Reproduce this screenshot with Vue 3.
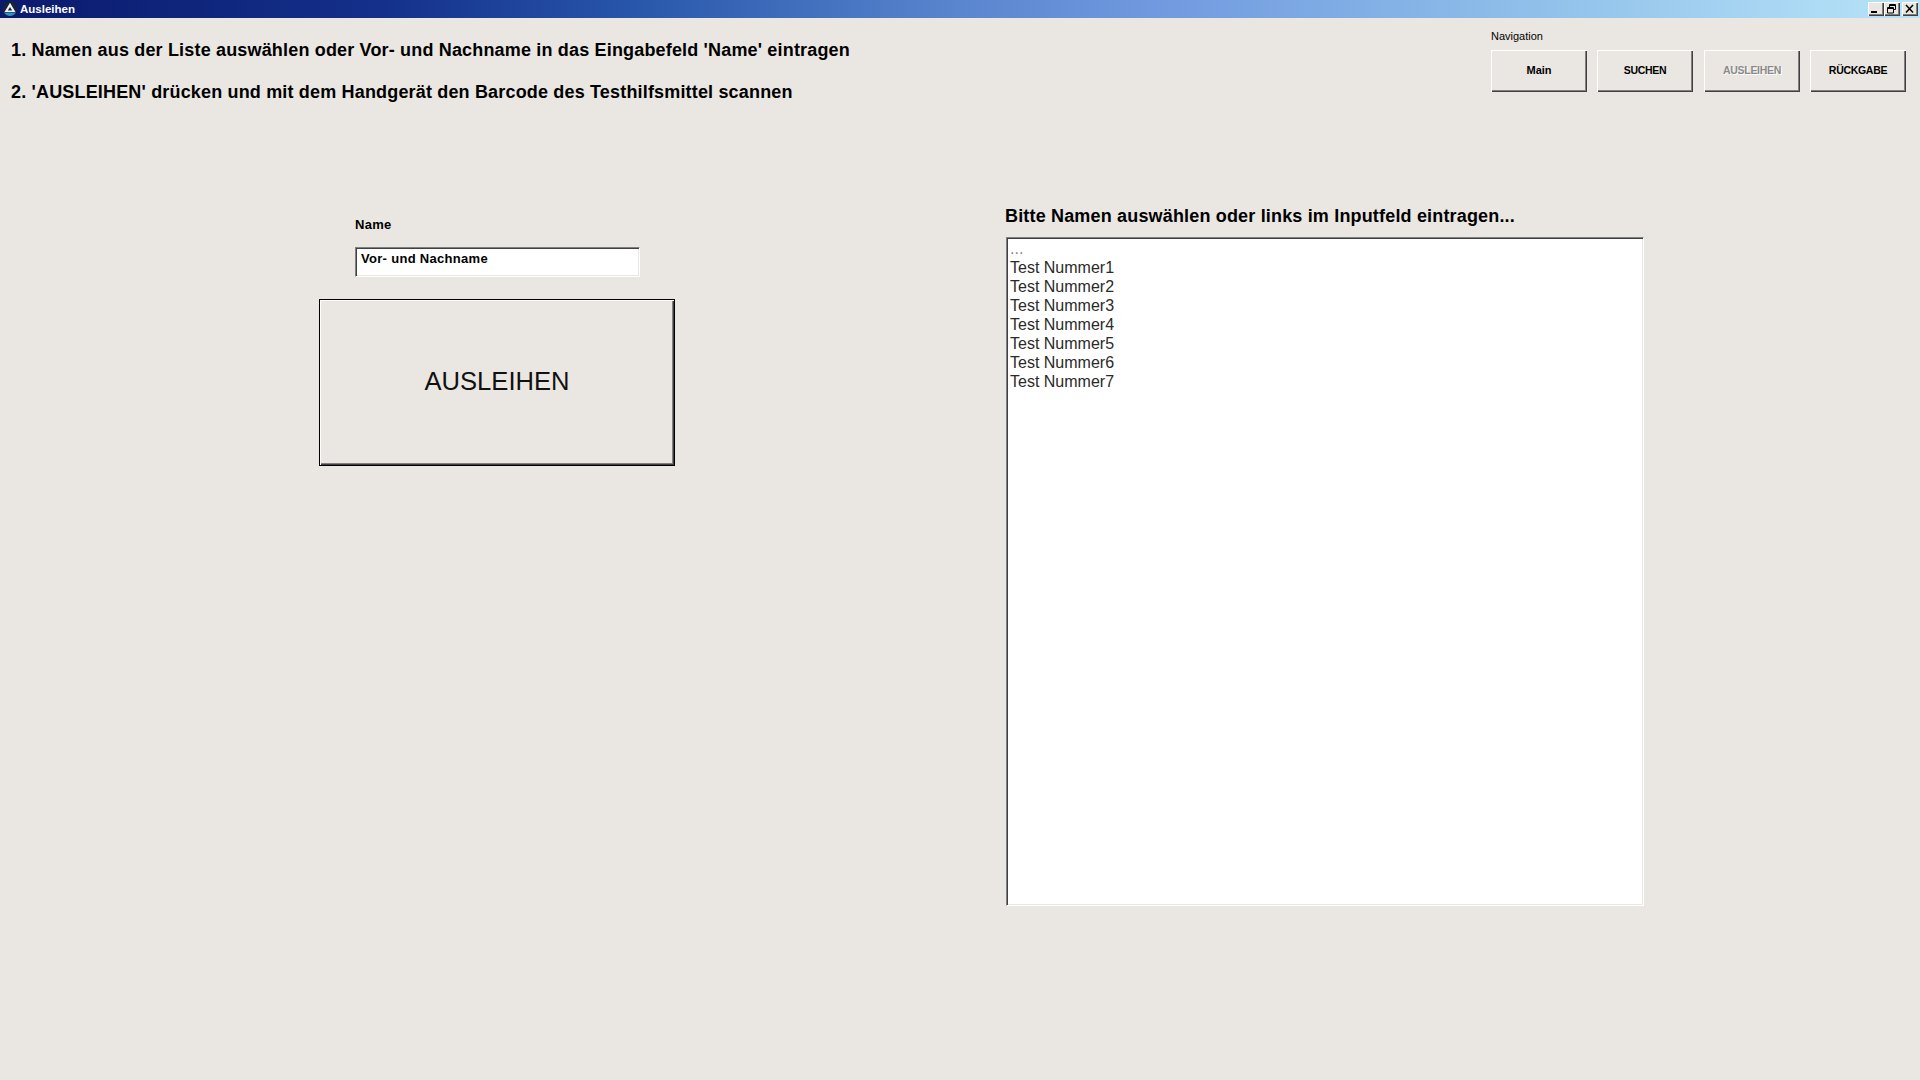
<script setup>
const navButtons = [
  { label: 'Main' },
  { label: 'SUCHEN' },
  { label: 'AUSLEIHEN', disabled: true },
  { label: 'RÜCKGABE' },
]
const names = ['...', 'Test Nummer1', 'Test Nummer2', 'Test Nummer3', 'Test Nummer4', 'Test Nummer5', 'Test Nummer6', 'Test Nummer7']
</script>

<template>
  <div class="window">
    <div class="titlebar">
      <div class="title">
        <svg class="app-icon" width="16" height="16" viewBox="0 0 16 16">
          <circle cx="8" cy="8" r="7.500" fill="#16233a" />
          <path d="M2 11.500a7 7 0 0 0 12 0z" fill="#2f8fc4" />
          <path d="M8 1.800 13.500 11H2.500z" fill="#f0f3f5" />
          <path d="M8 6 10.200 9.600H5.800z" fill="#16233a" />
        </svg>
        <span>Ausleihen</span>
      </div>
      <div class="win-controls">
        <button class="win-btn">
          <svg width="16" height="14" viewBox="0 0 16 14"><path d="M3 9h6v2H3z" fill="#000" /></svg>
        </button>
        <button class="win-btn">
          <svg width="16" height="14" viewBox="0 0 16 14" fill="none" stroke="#000">
            <path d="M5.500 5V2.500h6v5H9.500" /><path d="M5 3.500h7" />
            <path d="M3.500 5.500h6v5.500h-6z" /><path d="M3 6.500h7" />
          </svg>
        </button>
        <button class="win-btn">
          <svg width="16" height="14" viewBox="0 0 16 14" stroke="#000" stroke-width="1.500"><path d="M4 3l7 7.500M11 3l-7 7.500" /></svg>
        </button>
      </div>
    </div>

    <header class="top">
      <div class="instructions">
        <p>1. Namen aus der Liste auswählen oder Vor- und Nachname in das Eingabefeld 'Name' eintragen</p>
        <p>2. 'AUSLEIHEN' drücken und mit dem Handgerät den Barcode des Testhilfsmittel scannen</p>
      </div>
      <nav class="nav">
        <div class="nav-label">Navigation</div>
        <div class="nav-row">
          <button v-for="b in navButtons" :key="b.label" class="nav-btn" :class="{ disabled: b.disabled }"><span>{{ b.label }}</span></button>
        </div>
      </nav>
    </header>

    <main class="content">
      <section class="left">
        <div class="field">
          <label class="field-label">Name</label>
          <div class="input">Vor- und Nachname</div>
        </div>
        <button class="big-btn">AUSLEIHEN</button>
      </section>
      <section class="right">
        <h2 class="list-title">Bitte Namen auswählen oder links im Inputfeld eintragen...</h2>
        <ul class="list">
          <li v-for="(n, i) in names" :key="i" :class="{ muted: i === 0 }">{{ n }}</li>
        </ul>
      </section>
    </main>
  </div>
</template>

<style>
html, body { margin: 0; background: #eae7e2; }
</style>

<style scoped>
.window {
  width: 1920px;
  height: 1080px;
  background: #eae7e2;
  font-family: "Liberation Sans", Arial, sans-serif;
  color: #000;
  overflow: hidden;
}
.titlebar {
  height: 18px;
  display: flex;
  justify-content: space-between;
  align-items: center;
  background: linear-gradient(90deg, #0a1a6e 0%, #14308a 20%, #2856aa 33%, #5a86cf 50%, #7099df 60%, #90c0ea 80%, #b8e4f8 100%);
}
.title {
  display: flex;
  align-items: center;
  gap: 2px;
  padding-left: 2px;
  color: #fff;
  font-size: 11.500px;
  font-weight: 700;
}
.win-controls { display: flex; margin-right: 2px; }
.win-btn {
  width: 16px;
  height: 14px;
  padding: 0;
  display: block;
  border: 0;
  background: #eae7e2;
  box-shadow: inset 1px 1px 0 #fff, inset -1px -1px 0 #404040, inset -2px -2px 0 #808080;
}
.win-btn:nth-child(3) { margin-left: 2px; }
.win-btn svg { display: block; }

.top {
  display: flex;
  justify-content: space-between;
  padding: 0 14px 0 11px;
  height: 199px;
}
.instructions { padding-top: 22px; }
.instructions p {
  margin: 0 0 22px;
  font-size: 18px;
  letter-spacing: 0.170px;
  line-height: 20px;
  font-weight: 700;
  white-space: nowrap;
}
.nav { padding-top: 11px; width: 415px; }
.nav-label { font-size: 11px; line-height: 14px; margin-bottom: 7px; }
.nav-row { display: flex; gap: 10px; }
.nav-btn {
  width: 96px;
  height: 42px;
  padding: 0 0 2px;
  border: 0;
  background: #eae7e2;
  font-family: inherit;
  font-size: 10.500px;
  letter-spacing: -0.300px;
  font-weight: 700;
  color: #000;
  box-shadow: inset 1px 1px 0 #fff, inset -1px -1px 0 #404040, inset -2px -2px 0 #808080;
}
.nav-btn:first-child { font-size: 11px; letter-spacing: 0; }
.nav-btn.disabled { color: #8a8a8a; text-shadow: 1px 1px 0 #fff; margin-left: 1px; }

.content {
  display: flex;
  align-items: flex-start;
}
.left {
  width: 686px;
  padding-left: 319px;
  flex: none;
}
.field { padding-left: 36px; }
.field-label {
  display: block;
  font-size: 13px;
  font-weight: 700;
  line-height: 14px;
  padding-top: 1px;
  margin-bottom: 15px;
  letter-spacing: 0.300px;
}
.input {
  width: 285px;
  height: 30px;
  box-sizing: border-box;
  background: #fff;
  padding: 4px 0 0 5px;
  font-size: 13px;
  font-weight: 700;
  line-height: 14px;
  letter-spacing: 0.300px;
  border: 1px solid;
  border-color: #808080 #fff #fff #808080;
  box-shadow: inset 1px 1px 0 #404040, inset -1px -1px 0 #eae7e2;
}
.big-btn {
  display: block;
  margin-top: 22px;
  width: 356px;
  height: 167px;
  padding: 0 0 2px;
  border: 1px solid #000;
  background: #eae7e2;
  font-family: inherit;
  font-size: 25.600px;
  color: #111;
  box-shadow: inset 1px 1px 0 #fff, inset -1px -1px 0 #404040, inset -2px -2px 0 #808080;
}
.right { margin-top: -11px; }
.list-title {
  margin: 0 0 11px;
  font-size: 18px;
  letter-spacing: 0.170px;
  line-height: 20px;
  font-weight: 700;
  white-space: nowrap;
}
.list {
  list-style: none;
  margin: 0 0 0 1px;
  padding: 1px 0 0 3px;
  width: 638px;
  height: 669px;
  box-sizing: border-box;
  background: #fff;
  border: 1px solid;
  border-color: #808080 #fff #fff #808080;
  box-shadow: inset 1px 1px 0 #404040, inset -1px -1px 0 #eae7e2;
  font-size: 16px;
  line-height: 19px;
  color: #2a2a2a;
}
.list .muted { color: #888; }
</style>
